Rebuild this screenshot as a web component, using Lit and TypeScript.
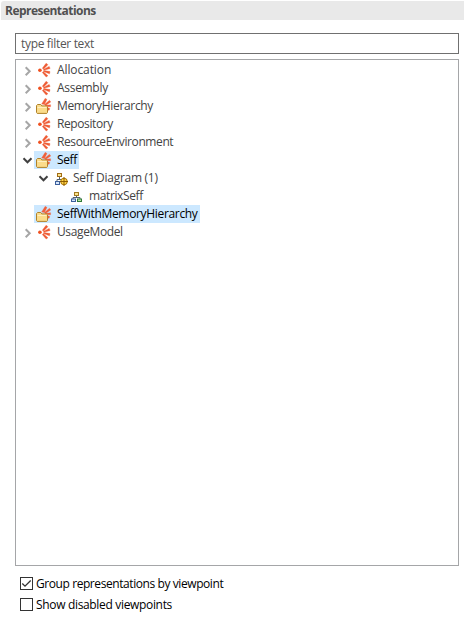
import { LitElement, html, css, svg, nothing } from "lit";
import { customElement, property } from "lit/decorators.js";
import { classMap } from "lit/directives/class-map.js";

type IconName = "viewpoint" | "folder" | "diagramGroup" | "diagram";

interface Row {
  label: string;
  icon: IconName;
  level: number;
  tracking: number;
  state?: "open" | "closed";
  selected?: boolean;
}

const ROWS: Row[] = [
  { label: "Allocation", icon: "viewpoint", level: 0, tracking: -0.1, state: "closed" },
  { label: "Assembly", icon: "viewpoint", level: 0, tracking: -0.3, state: "closed" },
  { label: "MemoryHierarchy", icon: "folder", level: 0, tracking: -0.33, state: "closed" },
  { label: "Repository", icon: "viewpoint", level: 0, tracking: -0.4, state: "closed" },
  { label: "ResourceEnvironment", icon: "viewpoint", level: 0, tracking: -0.4, state: "closed" },
  { label: "Seff", icon: "folder", level: 0, tracking: -0.4, state: "open", selected: true },
  { label: "Seff Diagram (1)", icon: "diagramGroup", level: 1, tracking: -0.28, state: "open" },
  { label: "matrixSeff", icon: "diagram", level: 2, tracking: -0.38 },
  { label: "SeffWithMemoryHierarchy", icon: "folder", level: 0, tracking: -0.33, selected: true },
  { label: "UsageModel", icon: "viewpoint", level: 0, tracking: -0.38, state: "closed" },
];

const ICONS = {
  viewpoint: svg`
    <circle cx="3.9" cy="8.3" r="1.8" fill="#f0501f"/>
    <path d="M6.3 6.3 L10.1 1.3 L11.9 2.7 L7.6 7 Z M7.4 7.4 L13.2 4.4 L14.1 6.5 L7.8 8.3 Z M7.8 8.6 L14 9.6 L13.5 11.8 L7.5 9.6 Z M7.4 9.8 L11.9 13.8 L10.2 15 L6.3 10.4 Z" fill="#ee5a33" stroke="#ee5a33" stroke-width=".4"/>`,
  folder: svg`
    <path d="M5.6 6 L9.2 .3 L11 1.4 L8.4 6.6 Z M8.4 6.4 L13.5 2.2 L14.8 4 L9.6 7.6 Z M9.6 7.2 L14.6 6.7 L14.6 8.8 L9.6 8.8 Z M10.6 9.2 L13.8 10.6 L13 12.4 L11.4 11.6 Z" fill="#f0603a" stroke="#f0603a" stroke-width=".3"/>
    <path d="M.5 14.5 V7.6 L1.5 6.5 H4.8 L5.8 7.9 H10.4 L11.5 8.9 V14.5 L10.8 15.4 H1.2 Z" fill="#fbdc8b" stroke="#b0822a"/>
    <path d="M1.5 9.5 H10.5" stroke="#fff0c2"/>`,
  diagramGroup: svg`
    <path d="M7.5 7 V9.5 M5 11.5 V9.5 H10" stroke="#53616e" fill="none"/>
    <rect x="5.5" y="3.5" width="4" height="3" fill="#fbe48f" stroke="#a16b16"/>
    <rect x="3.5" y="11.5" width="4" height="3" fill="#d5e6fa" stroke="#3c5f9c"/>
    <circle cx="12" cy="11.5" r="3.3" fill="#ffd447" stroke="#a87304"/>
    <path d="M12 7 V16 M7.7 11.5 H16" stroke="#8d5b00"/>`,
  diagram: svg`
    <path d="M8.5 8 V9.5 M5 11 V9.5 H12 V11" stroke="#53616e" fill="none"/>
    <rect x="6.5" y="4.5" width="4" height="3" fill="#fbe48f" stroke="#a17a20"/>
    <rect x="3.5" y="11" width="4" height="2.5" fill="#d5e6fa" stroke="#3c5f9c"/>
    <rect x="9.5" y="11" width="4" height="2.5" fill="#b9e5a6" stroke="#2f7a3a"/>`,
};

@customElement("tree-row")
class TreeRow extends LitElement {
  @property({ attribute: false }) row!: Row;

  static styles = css`
    :host { display: block; height: 18px; }
    .row { display: flex; height: 18px; align-items: center; }
    .level-1 { padding-left: 16px; }
    .level-2 { padding-left: 32px; }
    .twisty { width: 18px; height: 18px; flex: none; }
    .twisty svg, .icon { display: block; }
    .item { display: flex; align-items: center; height: 18px; padding: 0 2px; color: #434343; white-space: nowrap; }
    .selected { background: #cce8ff; color: #000; }
    .label { margin-left: 5px; line-height: 18px; }
  `;

  render() {
    const { label, icon, level, state, selected, tracking } = this.row;
    return html`<div class="row level-${level}">
      <div class="twisty">
        ${state
          ? html`<svg width="18" height="18" fill="none">
              ${state === "open"
                ? svg`<path d="M7.5 7.3 L11.5 11.3 L15.5 7.3" stroke="#404040" stroke-width="2"/>`
                : svg`<path d="M9.7 6.2 L13.7 10.2 L9.7 14.2" stroke="#a6a6a6" stroke-width="2"/>`}
            </svg>`
          : nothing}
      </div>
      <div class=${classMap({ item: true, selected: !!selected })}>
        <svg class="icon" width="16" height="16">${ICONS[icon]}</svg>
        <span class="label" style="letter-spacing:${tracking}px">${label}</span>
      </div>
    </div>`;
  }
}

@customElement("check-option")
class CheckOption extends LitElement {
  @property() label = "";
  @property({ type: Boolean }) checked = false;

  static styles = css`
    :host { display: flex; align-items: center; height: 21px; color: #000; }
    .box { display: block; flex: none; margin-right: 3px; }
    .label { line-height: 21px; white-space: nowrap; }
  `;

  render() {
    return html`<svg class="box" width="13" height="13" fill="none">
        <rect x=".5" y=".5" width="12" height="12" fill="#fff" stroke="#333"/>
        ${this.checked ? svg`<path d="M2.3 6.5 L5 9.2 L10.7 3.5" stroke="#333" stroke-width="1.3"/>` : nothing}
      </svg><span class="label">${this.label}</span>`;
  }
}

@customElement("app-root")
class AppRoot extends LitElement {
  static styles = css`
    :host { display: block; box-sizing: border-box; width: 464px; height: 638px; padding-top: 1px; background: #fff;
      font: 12px "Open Sans", "Noto Sans", sans-serif; letter-spacing: -0.33px; overflow: hidden; }
    .title { margin-left: 1px; height: 19px; padding-left: 4px; border-radius: 3px 0 0 0; background: #e9e9e9; color: #505050;
      font-weight: 700; line-height: 19px; letter-spacing: -0.53px; }
    .filter { box-sizing: border-box; width: 444px; height: 21px; margin: 13px 0 0 15px; padding-left: 5px;
      border: 1px solid #707070; color: #555; line-height: 20px; }
    .tree { box-sizing: border-box; width: 444px; height: 507px; margin: 5px 0 0 15px; padding-top: 1px; border: 1px solid #a5a6a8; }
    .options { margin: 7px 0 0 20px; }
    .group { letter-spacing: -0.42px; }
  `;

  render() {
    return html`
      <div class="title">Representations</div>
      <div class="filter">type filter text</div>
      <div class="tree">${ROWS.map((row) => html`<tree-row .row=${row}></tree-row>`)}</div>
      <div class="options">
        <check-option class="group" label="Group representations by viewpoint" checked></check-option>
        <check-option label="Show disabled viewpoints"></check-option>
      </div>`;
  }
}
